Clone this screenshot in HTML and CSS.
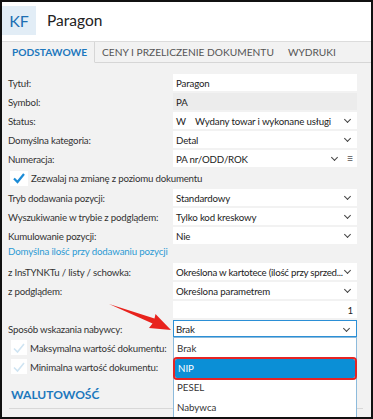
FILE: index.html
```html
<html>
<head>
	<link rel="stylesheet" href="styles.css">
</head>
<body>
	<div class="window">
		<div class="titlebar">
			<span class="badge">KF</span>
			<span class="title">Paragon</span>
		</div>
		<div class="tabs">
			<span class="tab active">PODSTAWOWE</span>
			<span class="tab">CENY I PRZELICZENIE DOKUMENTU</span>
			<span class="tab">WYDRUKI</span>
		</div>

		<div class="panel">
			<div class="row"><span class="label">Tytuł:</span><div class="field">Paragon</div></div>
			<div class="row"><span class="label">Symbol:</span><div class="field disabled">PA</div></div>
			<div class="row"><span class="label">Status:</span><div class="field select"><span class="code">W</span>Wydany towar i wykonane usługi<i class="chev"></i></div></div>
			<div class="row"><span class="label">Domyślna kategoria:</span><div class="field select">Detal<i class="chev"></i></div></div>
			<div class="row"><span class="label">Numeracja:</span><div class="field select">PA nr/ODD/ROK<i class="chev chev2"></i><span class="menu">&#8801;</span></div></div>

			<div class="checkrow">
				<span class="box"><svg width="14" height="12" viewBox="0 0 14 12"><polyline points="2,6.5 5.5,10 12,2" fill="none" stroke="#1b8bd6" stroke-width="2.2"/></svg></span>
				<span>Zezwalaj na zmianę z poziomu dokumentu</span>
			</div>

			<div class="row"><span class="label">Tryb dodawania pozycji:</span><div class="field select">Standardowy<i class="chev"></i></div></div>
			<div class="row"><span class="label">Wyszukiwanie w trybie z podglądem:</span><div class="field select">Tylko kod kreskowy<i class="chev"></i></div></div>
			<div class="row"><span class="label">Kumulowanie pozycji:</span><div class="field select">Nie<i class="chev"></i></div></div>

			<div class="subhead">Domyślna ilość przy dodawaniu pozycji</div>

			<div class="row"><span class="label">z InsTYNKTu / listy / schowka:</span><div class="field select"><span class="clip">Określona w kartotece (ilość przy sprzed...</span><i class="chev"></i></div></div>
			<div class="row"><span class="label">z podglądem:</span><div class="field select">Określona parametrem<i class="chev"></i></div></div>
			<div class="row"><span class="label"></span><div class="field number">1</div></div>
			<div class="row"><span class="label">Sposób wskazania nabywcy:</span><div class="field select focus">Brak<i class="chev"></i></div></div>

			<div class="checkrow faint">
				<span class="box"><svg width="14" height="12" viewBox="0 0 14 12"><polyline points="2,6.5 5.5,10 12,2" fill="none" stroke="#cfe4f2" stroke-width="1.6"/></svg></span>
				<span>Maksymalna wartość dokumentu:</span>
			</div>
			<div class="checkrow faint">
				<span class="box"><svg width="14" height="12" viewBox="0 0 14 12"><polyline points="2,6.5 5.5,10 12,2" fill="none" stroke="#cfe4f2" stroke-width="1.6"/></svg></span>
				<span>Minimalna wartość dokumentu:</span>
			</div>

			<div class="section">WALUTOWOŚĆ</div>
		</div>

		<ul class="dropdown">
			<li>Brak</li>
			<li class="picked">NIP</li>
			<li>PESEL</li>
			<li>Nabywca</li>
		</ul>

		<!-- red pointer drawn over the form -->
		<svg class="pointer" width="373" height="419" viewBox="0 0 373 419">
			<polygon points="109,304 152.5,323.5 149,328 171,330 155.5,314 154.5,318.5" fill="#e8231d"/>
		</svg>
	</div>
</body>
</html>
```

FILE: styles.css
```css
body{margin:0; font-family:Lato, "Noto Sans", sans-serif;}
.window{position:relative; width:373px; height:419px; box-sizing:border-box; border:2px solid #111; background:#f2f2f2; overflow:hidden;}

.titlebar{height:39px; background:#fff; display:flex; align-items:flex-start; padding-top:4px; box-sizing:border-box;}
.badge{width:34px; height:29px; background:#e2edf6; color:#1d6fb3; font-size:16px; display:flex; align-items:center; justify-content:center;}
.title{font-size:15.5px; color:#222; margin-left:11px; line-height:29px;}

.tabs{height:22px; display:flex; align-items:stretch; border-top:1px solid #dcdcdc; box-sizing:border-box;}
.tab{font-size:10.2px; color:#555; padding:0 7px 0 7px; line-height:21px; border-bottom:1px solid #d6d6d6; white-space:nowrap;}
.tab.active{color:#1d78bd; font-weight:bold; padding:0 7px 0 10px; border-right:1px solid #d6d6d6; border-bottom-color:transparent;}
.tab:last-child{flex:1; padding-left:7px;}

.panel{padding:11px 14px 0 6px; display:flex; flex-direction:column; gap:2px;}
.row{display:flex; height:17px; align-items:center;}
.label{width:165px; flex:none; font-size:9.7px; letter-spacing:-0.2px; color:#333; white-space:nowrap;}
.field{flex:1; height:17px; background:#fff; font-size:9.7px; letter-spacing:-0.15px; color:#222; display:flex; align-items:center; padding-left:3px; box-sizing:border-box; position:relative; white-space:nowrap;}
.field.disabled{background:#ececec;}
.field.number{justify-content:flex-end; padding-right:4px;}
.field.focus{border:1px solid #2b8fd6; padding-left:2px;}
.code{width:19px;}
.clip{letter-spacing:-0.25px;}
.chev{position:absolute; right:7px; top:5px; width:4px; height:4px; border-right:1.3px solid #444; border-bottom:1.3px solid #444; transform:rotate(45deg);}
.chev2{right:20px;}
.menu{position:absolute; right:4px; top:1px; font-size:11px; color:#555;}

.checkrow{display:flex; align-items:center; height:18px; font-size:9.7px; letter-spacing:-0.2px; color:#333; white-space:nowrap;}
.checkrow .box{width:18px; height:15px; background:#fff; margin:0 3px 0 2px; display:flex; align-items:center; justify-content:center;}
.checkrow.faint{height:17px; padding-left:1px;}
.checkrow.faint .box{width:16px;}

.subhead{font-size:9.7px; letter-spacing:-0.15px; color:#2c9ad4; height:15px; line-height:11px;}
.section{font-size:12px; font-weight:bold; color:#1d78bd; margin:10px -6px 0 1px; padding:0 0 6px 2px; border-bottom:1px solid #d8d8d8;}

.dropdown{position:absolute; left:171px; top:335px; width:184px; height:90px; margin:0; padding:1px 0 0 0; list-style:none; background:#fff; border:1px solid #8dbbdc; box-sizing:border-box;}
.dropdown li{height:19.5px; line-height:19.5px; font-size:9.7px; color:#333; padding-left:3px;}
.dropdown li.picked{background:#0b8fd6; color:#fff; outline:2px solid #e52424; outline-offset:0px; border-radius:2px; margin:0 1px;}

.pointer{position:absolute; left:-2px; top:-2px;}
```
